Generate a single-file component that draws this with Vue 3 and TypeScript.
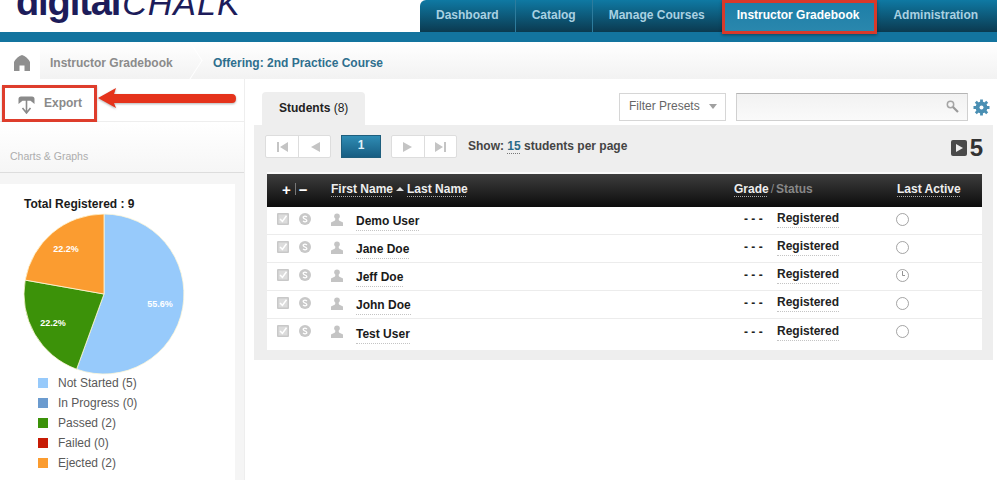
<script setup lang="ts">
interface Student { name: string; recent: boolean }
const tabs: string[] = ['Dashboard', 'Catalog', 'Manage Courses', 'Instructor Gradebook', 'Administration']
const students: Student[] = [
  { name: 'Demo User', recent: false },
  { name: 'Jane Doe', recent: false },
  { name: 'Jeff Doe', recent: true },
  { name: 'John Doe', recent: false },
  { name: 'Test User', recent: false },
]
const legend = [
  { label: 'Not Started (5)', color: '#97cafb' },
  { label: 'In Progress (0)', color: '#6b9bcf' },
  { label: 'Passed (2)', color: '#3c9209' },
  { label: 'Failed (0)', color: '#c71c05' },
  { label: 'Ejected (2)', color: '#fb9c30' },
]
</script>

<template>
  <div class="page">
    <header class="top">
      <div class="logo"><span class="digital">digital</span><span class="chalk">CHALK</span></div>
      <nav class="nav">
        <a v-for="t in tabs" :key="t" class="tab" :class="{ on: t === 'Instructor Gradebook' }">{{ t }}</a>
      </nav>
    </header>
    <div class="bar"></div>

    <div class="crumbs">
      <div class="home">
        <svg width="16" height="16" viewBox="0 0 16 16"><path d="M8 0 Q13 1.5 16 7 V16 H10.5 V10.5 H5.5 V16 H0 V7 Q3 1.5 8 0 Z" fill="#8f8f8f"/></svg>
      </div>
      <div class="crumb first">Instructor Gradebook</div>
      <div class="crumb second">Offering: 2nd Practice Course</div>
    </div>

    <div class="body">
      <aside class="side">
        <div class="export-row">
          <div class="export">
            <svg class="export-ic" width="17" height="18" viewBox="0 0 17 18">
              <path d="M0.5 8 V3 Q0.5 0.5 3 0.5 H14 Q16.5 0.5 16.5 3 V8 L12.5 4.8 H4.5 Z" fill="#8a8a8a"/>
              <path d="M8.5 3 V16 M4.5 12 L8.5 17 L12.5 12" fill="none" stroke="#8a8a8a" stroke-width="1.6"/>
            </svg>
            <span>Export</span>
          </div>
        </div>
        <div class="charts-head">Charts &amp; Graphs</div>
        <div class="chart-wrap">
          <div class="chart">
            <div class="chart-title">Total Registered : 9</div>
            <svg class="pie" width="162" height="162" viewBox="0 0 162 162">
              <g stroke="#fff8d8" stroke-width="0.8">
                <path d="M81 81 L81 1 A80 80 0 1 1 53.6 156.2 Z" fill="#97cafb"/>
                <path d="M81 81 L53.6 156.2 A80 80 0 0 1 2.2 67.1 Z" fill="#3c9209"/>
                <path d="M81 81 L2.2 67.1 A80 80 0 0 1 81 1 Z" fill="#fb9c30"/>
              </g>
              <text x="137" y="94" class="pct">55.6%</text>
              <text x="43" y="39" class="pct">22.2%</text>
              <text x="30" y="113" class="pct">22.2%</text>
            </svg>
            <ul class="legend">
              <li v-for="l in legend" :key="l.label">
                <i :style="{ background: l.color }"></i>{{ l.label }}
              </li>
            </ul>
          </div>
        </div>
      </aside>

      <main class="main">
        <div class="tools">
          <div class="stab"><b>Students</b> (8)</div>
          <div class="filters">
            <div class="presets">Filter Presets<i class="caret"></i></div>
            <div class="search">
              <svg width="13" height="13" viewBox="0 0 13 13"><circle cx="4.5" cy="4.5" r="3.2" fill="none" stroke="#a5a5a5" stroke-width="1.5"/><path d="M7 7 L12 12" stroke="#9a9a9a" stroke-width="2.2"/></svg>
            </div>
            <svg class="gear" width="17" height="17" viewBox="0 0 17 17">
              <circle cx="8.5" cy="8.5" r="4.2" fill="none" stroke="#4a8fb3" stroke-width="3.4"/>
              <path d="M8.5 0.5 V16.5 M0.5 8.5 H16.5 M2.8 2.8 L14.2 14.2 M14.2 2.8 L2.8 14.2" stroke="#4a8fb3" stroke-width="2.8"/>
              <circle cx="8.5" cy="8.5" r="2" fill="#fff"/>
            </svg>
          </div>
        </div>

        <section class="panel">
          <div class="pager-row">
            <div class="group">
              <span class="pg"><svg width="11" height="10" viewBox="0 0 11 10"><path d="M0 0 H2 V10 H0 Z M11 0 V10 L3 5 Z" fill="#c4c4c4"/></svg></span>
              <span class="pg"><svg width="11" height="10" viewBox="0 0 11 10"><path d="M11 0 V10 L2 5 Z" fill="#c4c4c4"/></svg></span>
            </div>
            <span class="current">1</span>
            <div class="group">
              <span class="pg"><svg width="11" height="10" viewBox="0 0 11 10"><path d="M0 0 V10 L9 5 Z" fill="#c4c4c4"/></svg></span>
              <span class="pg"><svg width="11" height="10" viewBox="0 0 11 10"><path d="M0 0 V10 L8 5 Z M9 0 H11 V10 H9 Z" fill="#c4c4c4"/></svg></span>
            </div>
            <div class="show">Show: <u>15</u> students per page</div>
            <div class="total">
              <span class="play"><svg width="8" height="8" viewBox="0 0 8 8"><path d="M1 0 V8 L8 4 Z" fill="#eee"/></svg></span>
              <b>5</b>
            </div>
          </div>

          <div class="table">
            <div class="thead">
              <div class="pm"><span>+</span><em></em><span>&minus;</span></div>
              <div class="names"><u>First Name</u><i class="up"></i><u>Last Name</u></div>
              <div class="grade"><u>Grade</u><small>/</small><span>Status</span></div>
              <div class="active"><u>Last Active</u></div>
            </div>
            <div class="tbody">
              <div v-for="s in students" :key="s.name" class="row">
                <span class="ic">
                  <svg width="12" height="12" viewBox="0 0 12 12"><rect width="12" height="12" rx="1" fill="#c8c8c8"/><rect x="1.5" y="1.5" width="9" height="9" fill="#dcdcdc"/><path d="M3 6 L5.4 8.4 L9.5 2.8" fill="none" stroke="#fff" stroke-width="1.5"/></svg>
                </span>
                <span class="ic">
                  <svg width="12" height="12" viewBox="0 0 12 12"><circle cx="6" cy="6" r="6" fill="#c8c8c8"/><path d="M8 4 Q6 2.5 4.4 3.7 Q3.6 5 6 6 Q8.4 7 7.6 8.3 Q6 9.5 4 8" fill="none" stroke="#fff" stroke-width="1.3"/></svg>
                </span>
                <span class="ic">
                  <svg width="12" height="13" viewBox="0 0 12 13"><circle cx="6" cy="3.2" r="2.8" fill="#c4c4c4"/><path d="M4.5 5.5 H7.5 L8 7.5 L12 9.5 V13 H0 V9.5 L4 7.5 Z" fill="#c4c4c4"/></svg>
                </span>
                <span class="name"><span>{{ s.name }}</span></span>
                <span class="dash">- - -</span>
                <span class="status"><span>Registered</span></span>
                <span class="clock">
                  <svg width="13" height="13" viewBox="0 0 13 13"><circle cx="6.5" cy="6.5" r="6" fill="#fff" stroke="#8d8d8d" stroke-width="0.8"/><path v-if="s.recent" d="M6.5 2 V6.5 H9" fill="none" stroke="#777" stroke-width="0.8"/></svg>
                </span>
              </div>
            </div>
          </div>
        </section>
      </main>
    </div>

    <svg class="arrow" width="142" height="30" viewBox="0 0 142 30">
      <path d="M1 15 L19 5 L17 11 L135 11 Q139 11 139 15.5 Q139 20 135 20 L17 20 L19 25 Z" fill="#e5331b"/>
    </svg>
  </div>
</template>

<style>
html, body { margin: 0; background: #fff; }
</style>

<style scoped>
.page {
  position: relative;
  width: 997px;
  height: 480px;
  overflow: hidden;
  font-family: "Liberation Sans", Arial, sans-serif;
  background: #fff;
}
.top { display: flex; height: 32px; }
.logo {
  margin-top: -16px;
  padding-left: 16px;
  height: 48px;
  line-height: 36px;
  color: #1d1c5a;
  white-space: nowrap;
}
.digital { font-size: 38px; font-weight: 700; letter-spacing: -1.1px; }
.chalk { font-size: 34px; font-style: italic; letter-spacing: 1px; margin-left: 2px; }
.nav { display: flex; margin-left: auto; width: 577px; border-radius: 6px 0 0 0; background: linear-gradient(#0f79a3, #0b3a50); }
.tab {
  box-sizing: border-box;
  height: 32px;
  padding: 8px 16px 0;
  font-size: 12px;
  font-weight: 700;
  color: #a9d1e2;
  border-right: 1px solid #2d7c9d;
  white-space: nowrap;
}
.tab:nth-child(3) { border-right: 0; padding-right: 17px; }
.tab:last-child { border-right: 0; }
.tab.on {
  position: relative;
  height: 34px;
  padding: 5px 15px 0 12px;
  border: 3px solid #d8392a;
  color: #fff;
  background: linear-gradient(#1d7fa8, #2a87ad);
  box-shadow: 0 1px 3px rgba(0, 0, 0, 0.4);
}
.bar { height: 10px; background: #13749f; }

.crumbs {
  display: flex;
  align-items: center;
  height: 37px;
  background: linear-gradient(#fff, #f2f2f2);
  font-size: 12px;
  font-weight: 700;
}
.home { width: 40px; height: 37px; display: flex; align-items: center; padding: 5px 0 0 14px; box-sizing: border-box; background: #fff; }
.crumb { position: relative; height: 37px; line-height: 42px; box-sizing: border-box; white-space: nowrap; overflow: hidden; }
.first { width: 163px; padding-left: 10px; color: #8b8b8b; }
.first::after {
  content: "";
  position: absolute;
  right: 2px;
  top: 5px;
  width: 26px;
  height: 26px;
  border-top: 1.5px solid #fff;
  border-right: 1.5px solid #fff;
  transform: rotate(45deg) skew(12deg, 12deg);
}
.second { padding-left: 10px; color: #2f6f8e; }

.body { display: flex; height: 401px; }
.side { box-sizing: border-box; width: 245px; border-right: 1px solid #eee; display: flex; flex-direction: column; }
.export-row { height: 43px; padding: 6px 0 0 2px; box-sizing: border-box; border-bottom: 1px solid #eee; }
.export {
  box-sizing: border-box;
  width: 95px;
  height: 37px;
  display: flex;
  align-items: center;
  gap: 9px;
  padding: 0 0 1px 13px;
  border: 3px solid #de3d2c;
  background: #fff;
  color: #8a8a8a;
  font-size: 12px;
  font-weight: 700;
  box-shadow: 0 1px 2px rgba(0, 0, 0, 0.25);
}
.export-ic { margin-top: 3px; }
.charts-head {
  box-sizing: border-box;
  height: 51px;
  padding: 28px 0 0 10px;
  font-size: 10.5px;
  color: #adadad;
  background: linear-gradient(#fff, #f6f6f6);
  border-bottom: 1px solid #ddd;
}
.chart-wrap { flex: 1; padding: 11px 9px 0 0; background: #f5f5f5; min-height: 0; }
.chart { height: 100%; background: #fff; padding: 13px 0 0 24px; box-sizing: border-box; }
.chart-title { font-size: 12px; font-weight: 700; line-height: 14px; color: #1a1a1a; }
.pie { display: block; margin: 2px 0 0 -1px; }
.pct { font-size: 9px; font-weight: 700; fill: #fff; text-anchor: middle; }
.legend { list-style: none; margin: -2px 0 0 14px; padding: 0; }
.legend li { display: flex; align-items: center; height: 20px; font-size: 12px; color: #595959; }
.legend i { width: 10px; height: 10px; margin-right: 10px; }

.main { flex: 1; padding: 0 4px 0 9px; min-width: 0; }
.tools { display: flex; height: 46px; align-items: flex-end; }
.stab {
  box-sizing: border-box;
  width: 103px;
  height: 33px;
  margin-left: 8px;
  padding: 9px 0 0 17px;
  background: #eee;
  border-radius: 4px 4px 0 0;
  font-size: 12px;
  color: #222;
}
.filters { display: flex; align-items: center; margin-left: auto; height: 28px; margin-bottom: 4px; padding-right: 3px; }
.presets {
  box-sizing: border-box;
  width: 107px;
  height: 28px;
  padding: 5px 0 0 9px;
  border: 1px solid #d6d6d6;
  font-size: 12px;
  color: #666;
}
.caret {
  display: inline-block;
  margin: 0 0 1px 9px;
  border: 4px solid transparent;
  border-top: 5px solid #a0a0a0;
  border-bottom: 0;
}
.search {
  box-sizing: border-box;
  width: 232px;
  height: 28px;
  margin-left: 10px;
  display: flex;
  align-items: center;
  justify-content: flex-end;
  padding: 0 8px 2px 0;
  border: 1px solid #d0d0d0;
  border-top-color: #b5b5b5;
  background: linear-gradient(#f2f2f2, #fafafa);
}
.gear { margin-left: 5px; }
.panel { background: #eee; padding: 0 11px 10px 13px; width: 739px; box-sizing: border-box; }
.pager-row { display: flex; align-items: flex-start; height: 47px; padding-top: 10px; box-sizing: border-box; margin-left: -2px; }
.group { display: flex; height: 23px; box-sizing: border-box; background: #fff; border: 1px solid #ddd; border-radius: 2px; }
.pg { width: 32px; box-sizing: border-box; display: flex; align-items: center; justify-content: center; }
.pg + .pg { border-left: 1px solid #ddd; }
.current {
  box-sizing: border-box;
  width: 40px;
  height: 23px;
  margin: 0 10px;
  text-align: center;
  line-height: 19px;
  color: #dff1f8;
  font-size: 12px;
  font-weight: 700;
  border: 1px solid #1e5e7d;
  background: linear-gradient(#2f8cb4, #175d82);
}
.show { margin-left: 11px; font-size: 12px; font-weight: 700; color: #444; line-height: 23px; }
.show u { color: #2b6a88; text-decoration: underline dotted #777; text-underline-offset: 3px; }
.total { margin-left: auto; margin-top: 2px; display: flex; align-items: center; gap: 3px; margin-right: -1px; }
.play { width: 16px; height: 16px; border-radius: 2px; background: #4a4a4a; display: flex; align-items: center; justify-content: center; }
.total b { font-size: 24px; line-height: 22px; color: #333; }
.table { background: #fff; border-top: 2px solid #fafafa; }
.thead {
  height: 33px;
  display: flex;
  align-items: center;
  color: #eee;
  font-size: 12px;
  font-weight: 700;
  padding-bottom: 3px;
  box-sizing: border-box;
  background: linear-gradient(#3d3d3d, #0c0c0c);
}
.thead u { text-decoration: underline dotted #aaa; text-underline-offset: 3px; }
.pm { width: 64px; padding-left: 15px; box-sizing: border-box; display: flex; align-items: center; font-size: 15px; color: #fff; }
.pm em { width: 1px; height: 12px; margin: 0 3px 0 4px; background: #777; }
.names { width: 403px; display: flex; align-items: center; }
.up { margin: 0 3px; border: 4px solid transparent; border-bottom: 4px solid #ddd; border-top: 0; }
.grade { width: 163px; }
.grade small { font-size: 12px; color: #888; margin: 0 2px; font-weight: 400; }
.grade span { color: #888; }
.tbody { padding-bottom: 3px; }
.row {
  display: grid;
  grid-template-columns: 22px 32px 25px 388px 33px 120px 1fr;
  align-items: center;
  height: 28px;
  padding-left: 10px;
  border-bottom: 1px solid #ececec;
  box-sizing: border-box;
}
.row:last-child { border-bottom: 0; }
.ic { height: 13px; display: flex; margin-bottom: 3px; }
.name { font-size: 12px; font-weight: 700; color: #1a1a1a; padding-top: 1px; }
.name span, .status span { border-bottom: 1px dotted #c4c4c4; padding-bottom: 2px; }
.dash { font-size: 12px; font-weight: 700; color: #222; margin-bottom: 3px; white-space: nowrap; }
.status { font-size: 12px; font-weight: 700; color: #222; margin-bottom: 5px; }
.clock { height: 13px; margin: 0 0 3px -1px; display: flex; }
.arrow { position: absolute; left: 97px; top: 83px; filter: drop-shadow(0 1px 1px rgba(0, 0, 0, 0.3)); }
</style>
